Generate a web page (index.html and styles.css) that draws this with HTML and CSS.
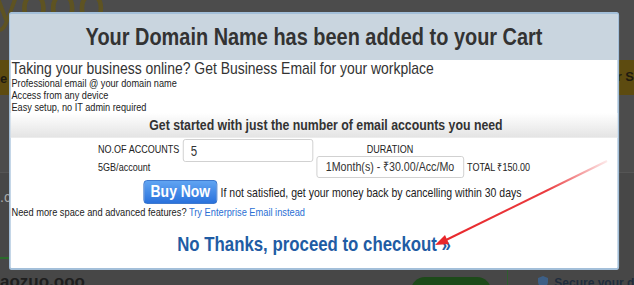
FILE: index.html
```html
<!DOCTYPE html>
<html lang="en">
<head>
    <meta charset="UTF-8">
    <title>Domain added to cart</title>
    <link rel="stylesheet" href="styles.css">
</head>
<body>
    <div class="page">
        <div class="bg-logo">yooo</div>
        <div class="bg-bar"><span class="bg-left">e</span><span class="bg-right">r S</span></div>
        <div class="bg-lower"><span class="bg-dotc">.c</span></div>
        <div class="bg-green-line"></div>
        <div class="bg-domain">aozuo.ooo</div>
        <div class="bg-green-btn"></div>
        <div class="bg-divider"></div>
        <div class="bg-secure">
            <svg width="10" height="12" viewBox="0 0 10 12"><path d="M5 0 L10 2 V6 C10 9 7.5 11 5 12 C2.5 11 0 9 0 6 V2 Z" fill="#3d5f86"/></svg>
            Secure your domain
        </div>

        <!-- the whole dialog is drawn a bit narrow, like the original capture -->
        <div class="modal">
            <div class="modal-header">
                <h2>Your Domain Name has been added to your Cart</h2>
            </div>
            <div class="modal-body">
                <p class="lead">Taking your business online? Get Business Email for your workplace</p>
                <ul class="points">
                    <li>Professional email @ your domain name</li>
                    <li>Access from any device</li>
                    <li>Easy setup, no IT admin required</li>
                </ul>
                <div class="band">Get started with just the number of email accounts you need</div>
                <div class="order">
                    <span class="lbl accounts-lbl">NO.OF ACCOUNTS</span>
                    <input class="accounts" type="text" value="5">
                    <span class="lbl duration-lbl">DURATION</span>
                    <span class="lbl storage">5GB/account</span>
                    <div class="duration">1Month(s) - ₹30.00/Acc/Mo</div>
                    <span class="lbl total">TOTAL ₹150.00</span>
                </div>
                <div class="buy-row">
                    <button class="buy">Buy Now</button>
                    <span class="note">If not satisfied, get your money back by cancelling within 30 days</span>
                </div>
                <p class="more">Need more space and advanced features? <a href="#">Try Enterprise Email instead</a></p>
                <a class="skip" href="#">No Thanks, proceed to checkout »</a>
            </div>
        </div>

        <svg class="arrow" width="634" height="285" viewBox="0 0 634 285">
            <defs>
                <linearGradient id="fade" x1="607" y1="161" x2="436" y2="246" gradientUnits="userSpaceOnUse">
                    <stop offset="0" stop-color="#e8262a" stop-opacity="0.1"/>
                    <stop offset="0.35" stop-color="#e8262a" stop-opacity="0.9"/>
                    <stop offset="1" stop-color="#e8262a"/>
                </linearGradient>
            </defs>
            <line x1="607" y1="161" x2="444" y2="241" stroke="url(#fade)" stroke-width="2"/>
            <polygon points="435,245 445,235 449,244" fill="#e8262a"/>
        </svg>
    </div>
</body>
</html>
```

FILE: styles.css
```css
html, body {
    margin: 0;
    padding: 0;
}
body {
    background: #4c4c4c;
    font-family: "Liberation Sans", Arial, sans-serif;
    color: #222;
}
.page {
    position: relative;
    width: 634px;
    height: 285px;
    overflow: hidden;
    padding-top: 12px;
    box-sizing: border-box;
}

/* page behind the overlay */
.bg-logo {
    position: absolute;
    left: -6px;
    top: -24px;
    font-size: 50px;
    color: #5e5322;
    letter-spacing: 1px;
}
.bg-bar {
    position: absolute;
    left: 0;
    top: 60px;
    width: 634px;
    height: 35px;
    background: #5d4b10;
    font-size: 13px;
    font-weight: bold;
    color: #1e1a10;
}
.bg-left {
    position: absolute;
    left: 0;
    top: 11px;
}
.bg-right {
    position: absolute;
    right: 0;
    top: 9px;
}
.bg-lower {
    position: absolute;
    left: 0;
    top: 172px;
    width: 634px;
    height: 113px;
    background: #474747;
    border-top: 1px solid #555;
}
.bg-dotc {
    position: absolute;
    left: 0;
    top: 16px;
    font-size: 14px;
    color: #aaa;
}
.bg-green-line {
    position: absolute;
    left: 0;
    top: 257px;
    width: 12px;
    height: 2px;
    background: #2c6b2c;
}
.bg-domain {
    position: absolute;
    left: 0;
    top: 272px;
    font-size: 17px;
    font-weight: bold;
    color: #1e1e1e;
}
.bg-green-btn {
    position: absolute;
    left: 411px;
    top: 277px;
    width: 80px;
    height: 30px;
    border-radius: 14px;
    background: #1d4a1a;
}
.bg-divider {
    position: absolute;
    left: 507px;
    top: 268px;
    width: 1px;
    height: 20px;
    background: #2f5e2f;
}
.bg-secure {
    position: absolute;
    left: 538px;
    top: 276px;
    font-size: 12px;
    font-weight: bold;
    color: #1f2c3d;
    white-space: nowrap;
}
.bg-secure svg {
    vertical-align: -1px;
    margin-right: 3px;
}

/* modal */
.modal {
    position: relative;
    margin-left: 9px;
    width: 744px;
    height: 258px;
    box-sizing: border-box;
    border: 2px solid #a3bfd9;
    border-radius: 3px;
    background: #fff;
    transform: scaleX(0.82);
    transform-origin: 0 0;
}
.modal-header {
    height: 46px;
    background: #c9d5df;
    display: flex;
    align-items: center;
    justify-content: center;
}
.modal-header h2 {
    margin: 0;
    font-size: 24.3px;
    font-weight: bold;
    color: #333;
}
.modal-body {
    padding: 0 1px;
}
.lead {
    margin: 0;
    font-size: 17px;
    line-height: 17px;
    color: #333;
}
.points {
    list-style: none;
    margin: 0;
    padding: 0;
    font-size: 11.2px;
    line-height: 12px;
}
.band {
    margin: 0 -1px;
    padding-left: 29px;
    height: 24px;
    line-height: 24px;
    text-align: center;
    font-size: 15px;
    font-weight: bold;
    color: #333;
    background: linear-gradient(#fff, #e4e4e4);
    border-bottom: 1px solid #ececec;
}
.order {
    display: grid;
    grid-template-columns: auto 159px 180px auto;
    grid-template-rows: 18px 22px;
    column-gap: 4px;
    justify-content: center;
    font-size: 11px;
}
.lbl {
    line-height: 13px;
}
.accounts-lbl {
    grid-column: 1;
    grid-row: 1;
    align-self: end;
}
.accounts {
    grid-column: 2;
    grid-row: 1;
    align-self: start;
    margin-top: 1px;
    height: 23px;
    box-sizing: border-box;
    border: 1px solid #ccc;
    border-radius: 3px;
    padding: 0 9px;
    font: 14px "Liberation Sans", sans-serif;
    color: #333;
}
.duration-lbl {
    grid-column: 3;
    grid-row: 1;
    align-self: end;
    text-align: center;
}
.storage {
    grid-column: 1;
    grid-row: 2;
    align-self: center;
    margin-top: 1px;
}
.duration {
    grid-column: 3;
    grid-row: 2;
    height: 22px;
    box-sizing: border-box;
    border: 1px solid #ccc;
    border-radius: 3px;
    text-align: center;
    line-height: 20px;
    font-size: 13px;
    color: #333;
    white-space: nowrap;
}
.total {
    grid-column: 4;
    grid-row: 2;
    align-self: center;
    margin-top: 1px;
    white-space: nowrap;
}
.buy-row {
    display: flex;
    align-items: center;
    gap: 4px;
    padding-left: 161px;
    margin-top: 2px;
}
.buy {
    width: 90px;
    height: 24px;
    padding: 0;
    border: 1px solid #2a6bc9;
    border-radius: 4px;
    background: linear-gradient(#60a4f2, #2a72dc);
    color: #fff;
    font: bold 17px "Liberation Sans", sans-serif;
    white-space: nowrap;
}
.note {
    font-size: 12.8px;
    line-height: 15px;
    white-space: nowrap;
}
.more {
    margin: 1px 0 0;
    font-size: 11.3px;
    line-height: 14px;
}
.more a {
    color: #2b6fd4;
    text-decoration: none;
}
.skip {
    display: block;
    margin-top: 13px;
    text-align: center;
    font-size: 20.5px;
    line-height: 24px;
    font-weight: bold;
    color: #1f5ca4;
    text-decoration: none;
}
.arrow {
    position: absolute;
    left: 0;
    top: 0;
}
```
